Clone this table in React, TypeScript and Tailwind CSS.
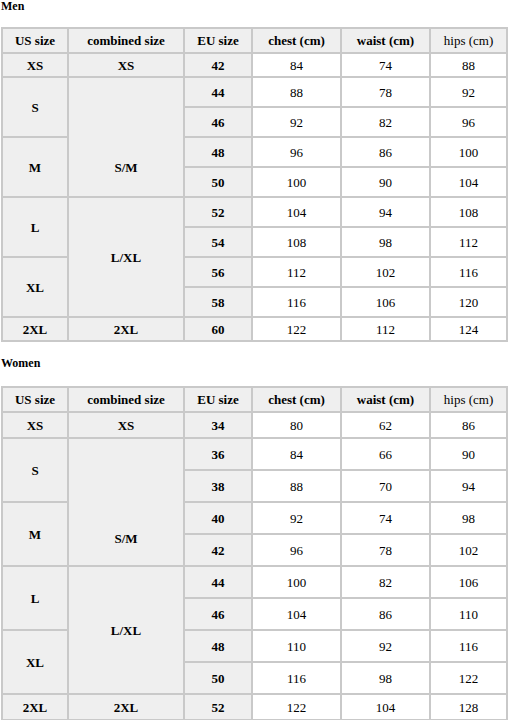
type Row = {
  us?: { label: string; span: number };
  combined?: { label: string; span: number; shift?: boolean };
  eu: string;
  chest: string;
  waist: string;
  hips: string;
  h: "small" | "tall";
};

const men: Row[] = [
  { us: { label: "XS", span: 1 }, combined: { label: "XS", span: 1 }, eu: "42", chest: "84", waist: "74", hips: "88", h: "small" },
  { us: { label: "S", span: 2 }, combined: { label: "S/M", span: 4, shift: true }, eu: "44", chest: "88", waist: "78", hips: "92", h: "tall" },
  { eu: "46", chest: "92", waist: "82", hips: "96", h: "tall" },
  { us: { label: "M", span: 2 }, eu: "48", chest: "96", waist: "86", hips: "100", h: "tall" },
  { eu: "50", chest: "100", waist: "90", hips: "104", h: "tall" },
  { us: { label: "L", span: 2 }, combined: { label: "L/XL", span: 4 }, eu: "52", chest: "104", waist: "94", hips: "108", h: "tall" },
  { eu: "54", chest: "108", waist: "98", hips: "112", h: "tall" },
  { us: { label: "XL", span: 2 }, eu: "56", chest: "112", waist: "102", hips: "116", h: "tall" },
  { eu: "58", chest: "116", waist: "106", hips: "120", h: "tall" },
  { us: { label: "2XL", span: 1 }, combined: { label: "2XL", span: 1 }, eu: "60", chest: "122", waist: "112", hips: "124", h: "small" },
];

const women: Row[] = [
  { us: { label: "XS", span: 1 }, combined: { label: "XS", span: 1 }, eu: "34", chest: "80", waist: "62", hips: "86", h: "small" },
  { us: { label: "S", span: 2 }, combined: { label: "S/M", span: 4, shift: true }, eu: "36", chest: "84", waist: "66", hips: "90", h: "tall" },
  { eu: "38", chest: "88", waist: "70", hips: "94", h: "tall" },
  { us: { label: "M", span: 2 }, eu: "40", chest: "92", waist: "74", hips: "98", h: "tall" },
  { eu: "42", chest: "96", waist: "78", hips: "102", h: "tall" },
  { us: { label: "L", span: 2 }, combined: { label: "L/XL", span: 4 }, eu: "44", chest: "100", waist: "82", hips: "106", h: "tall" },
  { eu: "46", chest: "104", waist: "86", hips: "110", h: "tall" },
  { us: { label: "XL", span: 2 }, eu: "48", chest: "110", waist: "92", hips: "116", h: "tall" },
  { eu: "50", chest: "116", waist: "98", hips: "122", h: "tall" },
  { us: { label: "2XL", span: 1 }, combined: { label: "2XL", span: 1 }, eu: "52", chest: "122", waist: "104", hips: "128", h: "small" },
];

const cell = "border-2 border-[#c9c9c9] text-center align-middle p-0";
const gray = "bg-[#efefef] font-bold";

function SizeTable({ rows, small, tall, header, shift }: { rows: Row[]; small: string; tall: string; header: string; shift: string }) {
  return (
    <table className="w-[507px] table-fixed border-collapse text-[13px] leading-none text-black [font-family:'Liberation_Serif',serif]">
      <colgroup>
        <col className="w-[66px]" />
        <col className="w-[116px]" />
        <col className="w-[68px]" />
        <col className="w-[89px]" />
        <col className="w-[89px]" />
        <col />
      </colgroup>
      <thead>
        <tr className={header}>
          <th className={`${cell} ${gray}`}>US size</th>
          <th className={`${cell} ${gray}`}>combined size</th>
          <th className={`${cell} ${gray}`}>EU size</th>
          <th className={`${cell} ${gray}`}>chest (cm)</th>
          <th className={`${cell} ${gray}`}>waist (cm)</th>
          <th className={`${cell} bg-[#efefef] font-normal`}>hips (cm)</th>
        </tr>
      </thead>
      <tbody>
        {rows.map((r) => (
          <tr key={r.eu} className={r.h === "small" ? small : tall}>
            {r.us && (
              <td rowSpan={r.us.span} className={`${cell} ${gray}`}>
                {r.us.label}
              </td>
            )}
            {r.combined && (
              <td rowSpan={r.combined.span} className={`${cell} ${gray} ${r.combined.shift ? shift : ""}`}>
                {r.combined.label}
              </td>
            )}
            <td className={`${cell} ${gray}`}>{r.eu}</td>
            <td className={cell}>{r.chest}</td>
            <td className={cell}>{r.waist}</td>
            <td className={cell}>{r.hips}</td>
          </tr>
        ))}
      </tbody>
    </table>
  );
}

export default function App() {
  return (
    <div className="w-[508px] bg-white pl-px text-black [font-family:'Liberation_Serif',serif]">
      <h2 className="h-[12px] text-[12px] font-bold leading-[12px]">Men</h2>
      <div className="mt-[15px]">
        <SizeTable rows={men} header="h-[25px]" small="h-[24px]" tall="h-[30px]" shift="pt-[60px]" />
      </div>
      <h2 className="mt-[15px] h-[12px] text-[12px] font-bold leading-[12px]">Women</h2>
      <div className="mt-[17px]">
        <SizeTable rows={women} header="h-[25px]" small="h-[26px]" tall="h-[32px]" shift="pt-[72px]" />
      </div>
    </div>
  );
}
